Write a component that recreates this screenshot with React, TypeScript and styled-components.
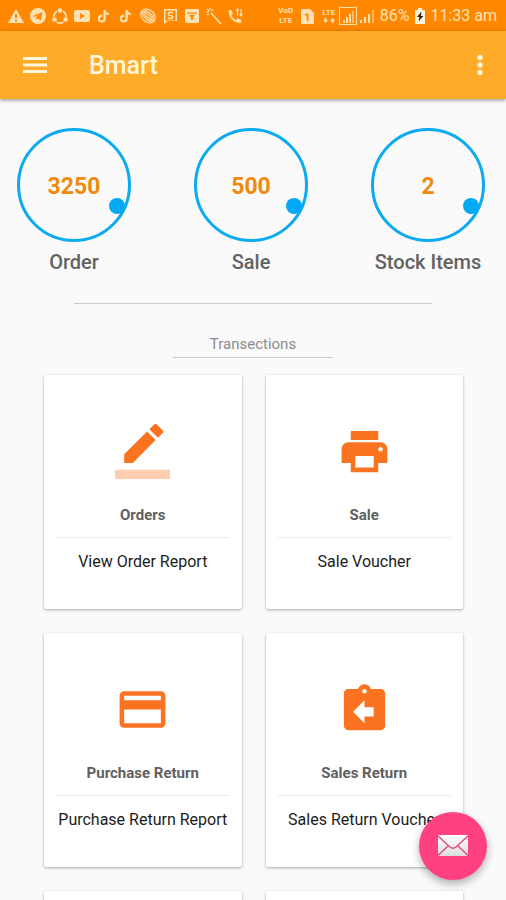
import React from "react";
import styled, { createGlobalStyle } from "styled-components";

const GlobalStyle = createGlobalStyle`
  *, *::before, *::after { box-sizing: border-box; }
  body {
    margin: 0;
    background: #fafafa;
    font-family: Roboto, "Noto Sans", sans-serif;
  }
  button { font: inherit; border: 0; padding: 0; background: none; cursor: pointer; }
`;

const Screen = styled.div`
  display: flex;
  flex-direction: column;
  height: 100vh;
`;

const StatusBar = styled.div`
  display: flex;
  align-items: center;
  justify-content: space-between;
  height: 31px;
  padding: 1px 9px 0 8px;
  background: #ff8800;
  color: #ffe2b3;
`;

const Notifications = styled.div`
  display: flex;
  gap: 6px;
`;

const StatusInfo = styled.div`
  display: flex;
  align-items: center;
  white-space: nowrap;
`;

const Glyph = styled.svg`
  display: block;
  flex: none;
`;

const Stacked = styled.span`
  display: flex;
  flex-direction: column;
  align-items: center;
  width: 16px;
  font-size: 8px;
  font-weight: 700;
  line-height: 10px;
`;

const StatusText = styled.span`
  font-size: 16px;
  line-height: 20px;
`;

const Spacer = styled.span<{ $w: number }>`
  flex: none;
  width: ${(p) => p.$w}px;
`;

const AppBar = styled.header`
  position: relative;
  z-index: 1;
  display: flex;
  align-items: center;
  flex: none;
  height: 68px;
  padding: 0 15px 0 16px;
  background: #ffab2a;
  color: #fff5d9;
  box-shadow: 0 1px 4px rgba(0, 0, 0, 0.45);
`;

const IconButton = styled.button<{ $w: number }>`
  display: grid;
  place-items: center;
  width: ${(p) => p.$w}px;
  height: 40px;
  color: inherit;
`;

const Title = styled.h1`
  flex: 1;
  margin: 0 0 0 35px;
  padding-top: 2px;
  font-size: 25px;
  font-weight: 500;
  line-height: 32px;
`;

const Content = styled.main`
  flex: 1;
  min-height: 0;
  overflow-y: auto;
  scrollbar-width: none;
  padding-bottom: 24px;
`;

const Stats = styled.section`
  display: flex;
  justify-content: space-between;
  padding: 29px 21px 0 17px;
`;

const Stat = styled.div`
  display: flex;
  flex-direction: column;
  align-items: center;
  width: 114px;
`;

const Ring = styled.div`
  position: relative;
  display: grid;
  place-items: center;
  width: 114px;
  height: 114px;
  padding-top: 2px;
  border: 3px solid #0caaf0;
  border-radius: 50%;
  color: #ef8a0c;
  font-size: 23px;
  font-weight: 700;

  &::after {
    content: "";
    position: absolute;
    right: 3px;
    bottom: 25px;
    width: 16px;
    height: 16px;
    border-radius: 50%;
    background: #03a9f4;
  }
`;

const StatLabel = styled.span`
  margin-top: 6px;
  color: #626262;
  font-size: 20px;
  font-weight: 500;
  line-height: 28px;
  white-space: nowrap;
`;

const Divider = styled.hr`
  width: 358px;
  max-width: 80%;
  height: 1px;
  margin: 27px auto 30px;
  border: 0;
  background: #cbcbcb;
`;

const SectionTitle = styled.h2`
  width: 160px;
  margin: 0 auto;
  padding-bottom: 3px;
  border-bottom: 1px solid #cbcbcb;
  color: #8c8c8c;
  font-size: 15px;
  font-weight: 400;
  line-height: 20px;
  text-align: center;
`;

const Grid = styled.section`
  display: grid;
  grid-template-columns: 1fr 1fr;
  gap: 24px;
  padding: 17px 43px 0 44px;
`;

const Card = styled.article`
  display: flex;
  flex-direction: column;
  align-items: center;
  min-width: 0;
  min-height: 234px;
  padding: 49px 12px 36px;
  border-radius: 2px;
  background: #fff;
  box-shadow: 0 1px 3px rgba(0, 0, 0, 0.32);
  color: #fb7320;
`;

const CardTitle = styled.h3`
  margin: 26px 0 12px;
  color: #606060;
  font-size: 15px;
  font-weight: 700;
  line-height: 20px;
  white-space: nowrap;
`;

const CardAction = styled.button`
  align-self: stretch;
  padding-top: 14px;
  border-top: 1px solid #ececec;
  color: #1c1c1c;
  font-size: 16px;
  line-height: 20px;
  white-space: nowrap;
`;

const Fab = styled.button`
  position: fixed;
  right: 19px;
  bottom: 20px;
  z-index: 2;
  display: grid;
  place-items: center;
  width: 68px;
  height: 68px;
  border-radius: 50%;
  background: #ff4081;
  box-shadow: 0 4px 8px rgba(0, 0, 0, 0.3);
`;

const notificationIcons: React.ReactNode[] = [
  <path fillRule="evenodd" d="M8 1 16 15H0zM7 6v4h2V6zm0 5.500v2h2v-2z" />,
  <path fillRule="evenodd" d="M8 0a8 8 0 1 0 0 16A8 8 0 0 0 8 0zM12.500 4 10.800 12.500 7.800 10.300 6.300 11.800 6 9.300 10.500 5.600 5 8.900 2.800 8z" />,
  <g fill="none" stroke="currentColor" strokeWidth="1.600">
    <path d="M5 3.200A6.500 6.500 0 0 0 1.800 9M11 3.200A6.500 6.500 0 0 1 14.200 9M4.500 14a6.500 6.500 0 0 0 7 0" />
    <g fill="currentColor" stroke="none">
      <circle cx="8" cy="2.500" r="2.300" /><circle cx="2.500" cy="11.500" r="2.300" /><circle cx="13.500" cy="11.500" r="2.300" />
    </g>
  </g>,
  <path fillRule="evenodd" d="M2.500 2h11A2.500 2.500 0 0 1 16 4.500v7a2.500 2.500 0 0 1-2.500 2.500h-11A2.500 2.500 0 0 1 0 11.500v-7A2.500 2.500 0 0 1 2.500 2zM6 5v6l5-3z" />,
  <path d="M7.500 2h2.300c.2 1.800 1.200 2.800 3 3v2.200c-1.100 0-2.100-.3-3-.9v4.200a4 4 0 1 1-4-4l.5.100v2.300a1.800 1.800 0 1 0 1.200 1.600z" />,
  <path d="M7.500 2h2.300c.2 1.800 1.200 2.800 3 3v2.200c-1.100 0-2.100-.3-3-.9v4.200a4 4 0 1 1-4-4l.5.100v2.300a1.800 1.800 0 1 0 1.200 1.600z" />,
  <g fill="none" stroke="currentColor" strokeWidth="1.300" transform="rotate(42 8 8)">
    <ellipse cx="8" cy="8" rx="8" ry="6" /><ellipse cx="8" cy="8" rx="6.500" ry="3.500" /><ellipse cx="8" cy="8" rx="5" ry="1.300" />
  </g>,
  <g>
    <path fillRule="evenodd" d="M2 1h13v12H6l-4 3zM3.500 2.500v10h10v-10z" />
    <path d="M11 5.200C9.500 3.800 6.300 4 6.300 5.900c0 2.100 4.600 1 4.600 3.200 0 1.900-3.400 2-4.900.6" fill="none" stroke="currentColor" strokeWidth="1.600" />
  </g>,
  <path fillRule="evenodd" d="M2 1h12l1 1v12l-1 1H2l-1-1V2zM3 4.500v1.200h10V4.500zM5 7l1.500 1.500L7.200 12h1.600l.7-3.500L11 7z" />,
  <g fill="none" stroke="currentColor" strokeWidth="1.600">
    <path d="m5 5 10 11" /><path strokeWidth="1.100" d="M4 0v3M0 4h3M1 1l2 2M7 1 6 3M1 7l2-1" />
  </g>,
  <g>
    <path d="m3.500 2 1.500 3.400-1.800 1.700c.9 2.300 2.600 4 4.800 5l1.800-1.800 3.400 1.500v2.900C6 15.700.3 9.500.800 2.300z" />
    <path d="M9.500 1v7M13 1v7M8 3l1.500-2L11 3M11.500 6 13 8l1.500-2" fill="none" stroke="currentColor" strokeWidth="1.200" />
  </g>,
];

const PencilIcon = (
  <>
    <path d="M17.750 7 14 3.250l-10 10V17h3.750l10-10zm2.960-2.960a.996.996 0 0 0 0-1.410L18.370.290a.996.996 0 0 0-1.410 0L15 2.250 18.750 6l1.960-1.960z" />
    <path fillOpacity=".36" d="M0 20h24v4H0z" />
  </>
);
const PrinterIcon = (
  <path d="M19 8H5c-1.660 0-3 1.340-3 3v6h4v4h12v-4h4v-6c0-1.660-1.340-3-3-3zm-3 11H8v-5h8v5zm3-7c-.55 0-1-.45-1-1s.45-1 1-1 1 .45 1 1-.45 1-1 1zm-1-9H6v4h12V3z" />
);
const CreditCardIcon = (
  <path d="M20 4H4c-1.110 0-1.990.89-1.990 2L2 18c0 1.110.89 2 2 2h16c1.110 0 2-.89 2-2V6c0-1.110-.89-2-2-2zm0 14H4v-6h16v6zm0-10H4V6h16v2z" />
);
const ReturnIcon = (
  <path d="M19 3h-4.180C14.400 1.840 13.300 1 12 1c-1.300 0-2.400.84-2.820 2H5c-1.100 0-2 .9-2 2v14c0 1.100.9 2 2 2h14c1.100 0 2-.9 2-2V5c0-1.100-.9-2-2-2zm-7 0c.55 0 1 .45 1 1s-.45 1-1 1-1-.45-1-1 .45-1 1-1zm4 12h-4v3l-5-5 5-5v3h4v4z" />
);

const stats = [
  { value: "3250", label: "Order" },
  { value: "500", label: "Sale" },
  { value: "2", label: "Stock Items" },
];

const cards = [
  { icon: PencilIcon, title: "Orders", action: "View Order Report" },
  { icon: PrinterIcon, title: "Sale", action: "Sale Voucher" },
  { icon: CreditCardIcon, title: "Purchase Return", action: "Purchase Return Report" },
  { icon: ReturnIcon, title: "Sales Return", action: "Sales Return Voucher" },
];

export default function App() {
  return (
    <Screen>
      <GlobalStyle />
      <StatusBar>
        <Notifications>
          {notificationIcons.map((icon, i) => (
            <Glyph key={i} width="16" height="16" viewBox="0 0 16 16" fill="currentColor" aria-hidden="true">
              {icon}
            </Glyph>
          ))}
        </Notifications>
        <StatusInfo>
          <Stacked><span>VoD</span><span>LTE</span></Stacked>
          <Spacer $w={7} />
          <Glyph width="13" height="15" viewBox="0 0 13 15" fill="currentColor" aria-hidden="true">
            <path fillRule="evenodd" d="M1 0h8l4 4v10l-1 1H1l-1-1V1zM4 5v1.500h1.800V12h1.700V4.500H5.500z" />
          </Glyph>
          <Spacer $w={7} />
          <Stacked>
            <span>LTE</span>
            <Glyph width="12" height="6" viewBox="0 0 12 6" fill="currentColor" aria-hidden="true">
              <path d="M0 2h1.500V0h2v2H5L2.500 5zM7 3l2.500-3L12 3h-1.500v2h-2V3z" />
            </Glyph>
          </Stacked>
          <Spacer $w={2} />
          <Glyph width="18" height="18" viewBox="0 0 18 18" fill="currentColor" aria-hidden="true">
            <path d="M.5.500h17v17H.5z" fill="none" stroke="currentColor" />
            <path d="M4 13h2v3H4zM7 10h2v6H7zM10 7h2v9h-2z" /><path opacity=".55" d="M13 4h2v12h-2z" />
          </Glyph>
          <Spacer $w={3} />
          <Glyph width="14" height="14" viewBox="0 0 14 14" fill="currentColor" aria-hidden="true">
            <path d="M0 11h2v3H0zM4 8h2v6H4zM8 5h2v9H8z" /><path opacity=".5" d="M12 1h2v13h-2z" />
          </Glyph>
          <Spacer $w={6} />
          <StatusText>86%</StatusText>
          <Spacer $w={6} />
          <Glyph width="10" height="16" viewBox="0 0 10 16" aria-hidden="true">
            <path d="M3 0h4v2h3v14H0V2h3z" fill="#fff3da" />
            <path d="M6.500 3.500 2 9h2.500l-1 4.500L8.300 8H5.700z" fill="#2a1c08" />
          </Glyph>
          <Spacer $w={5} />
          <StatusText>11:33 am</StatusText>
        </StatusInfo>
      </StatusBar>

      <AppBar>
        <IconButton $w={38} type="button" aria-label="Open menu">
          <Glyph width="24" height="18" viewBox="0 0 24 18" fill="currentColor">
            <path d="M0 1h24v3H0zM0 7.500h24v3H0zM0 14h24v3H0z" />
          </Glyph>
        </IconButton>
        <Title>Bmart</Title>
        <IconButton $w={22} type="button" aria-label="More options">
          <Glyph width="6" height="22" viewBox="0 0 6 22" fill="currentColor">
            <circle cx="3" cy="3.500" r="2.700" /><circle cx="3" cy="11" r="2.700" /><circle cx="3" cy="18.500" r="2.700" />
          </Glyph>
        </IconButton>
      </AppBar>

      <Content>
        <Stats>
          {stats.map((s) => (
            <Stat key={s.label}>
              <Ring>{s.value}</Ring>
              <StatLabel>{s.label}</StatLabel>
            </Stat>
          ))}
        </Stats>
        <Divider />
        <SectionTitle>Transections</SectionTitle>
        <Grid>
          {cards.map((c) => (
            <Card key={c.title}>
              <Glyph width="55" height="55" viewBox="0 0 24 24" fill="currentColor" aria-hidden="true">
                {c.icon}
              </Glyph>
              <CardTitle>{c.title}</CardTitle>
              <CardAction type="button">{c.action}</CardAction>
            </Card>
          ))}
          <Card />
          <Card />
        </Grid>
      </Content>

      <Fab type="button" aria-label="Send message">
        <Glyph width="32" height="22" viewBox="0 0 32 22">
          <defs>
            <linearGradient id="paper" x1="0" y1="0" x2="0" y2="1">
              <stop offset="0" stopColor="#ffffff" />
              <stop offset="1" stopColor="#dcdcdc" />
            </linearGradient>
          </defs>
          <rect x="1" y="0" width="30" height="21" rx="1" fill="url(#paper)" />
          <path d="M1 1 13 12q3 2.500 6 0L31 1M1 20.500 11.500 10.500M31 20.500 20.500 10.500" fill="none" stroke="#e0447c" strokeWidth="1.300" />
        </Glyph>
      </Fab>
    </Screen>
  );
}
